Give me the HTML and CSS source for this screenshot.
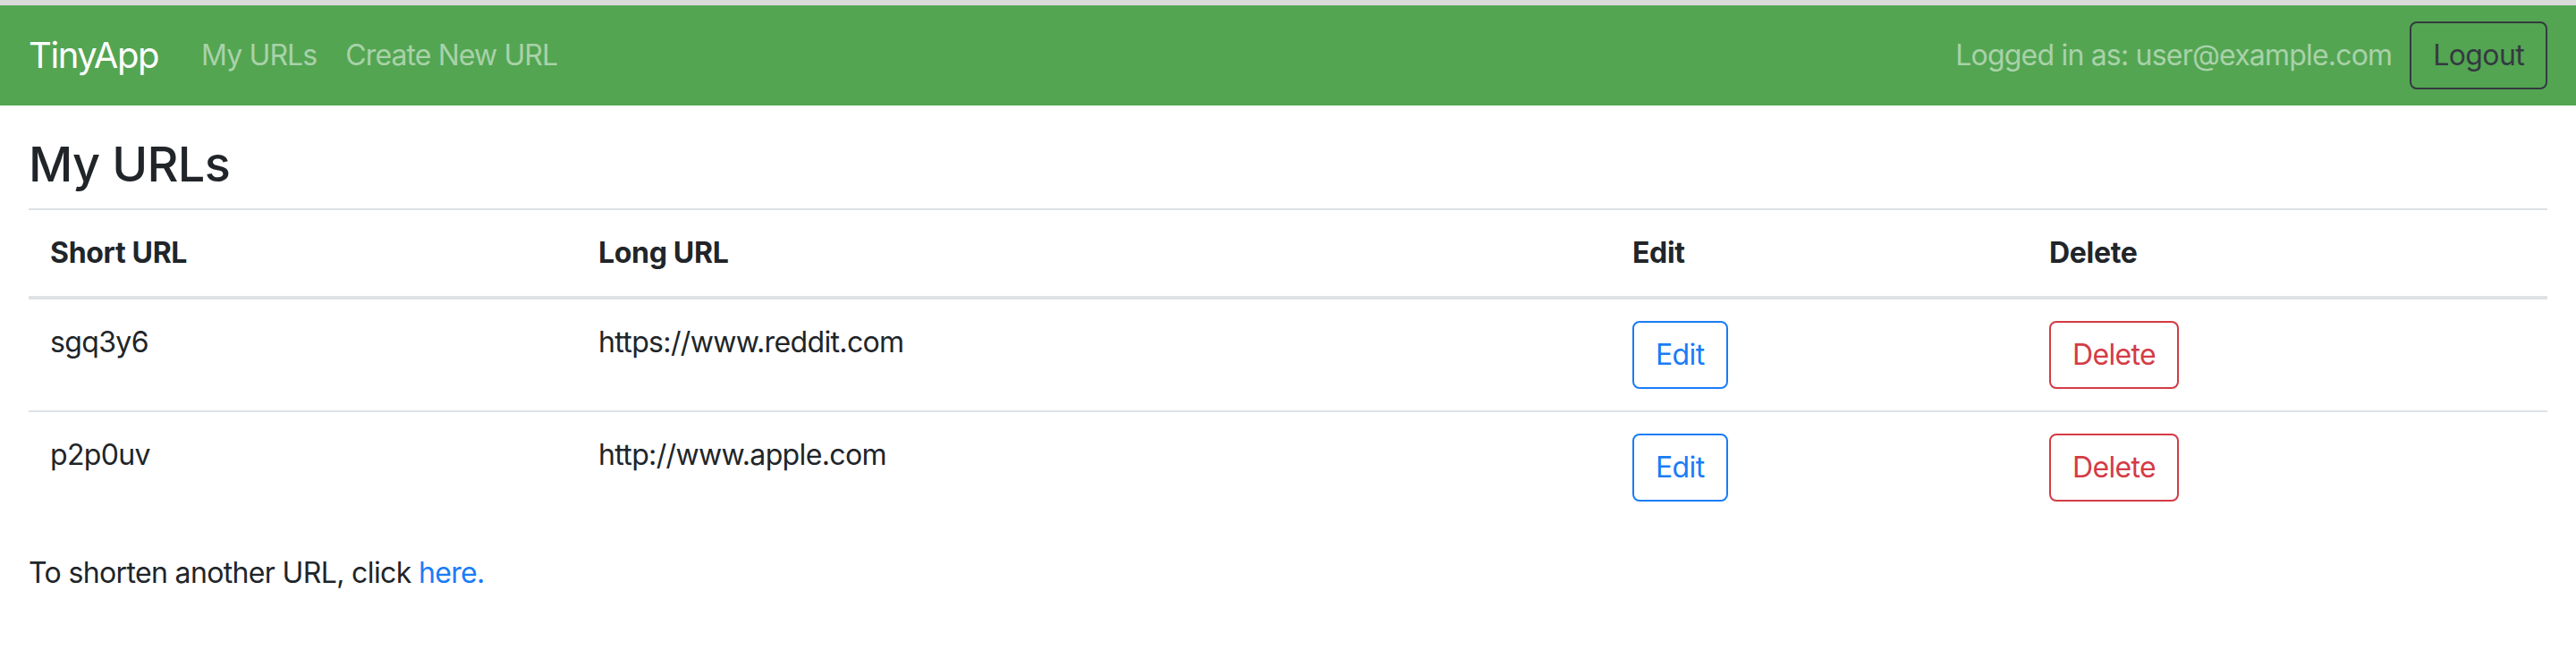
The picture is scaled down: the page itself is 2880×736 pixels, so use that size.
FILE: index.html
```html
<!DOCTYPE html>
<html lang="en">
<head>
<meta charset="utf-8">
<title>TinyApp</title>
<link rel="stylesheet" href="styles.css">
</head>
<body>
<div class="topstrip"></div>
<nav class="navbar">
  <a class="brand" href="#">TinyApp</a>
  <div class="nav-links">
    <a class="nav-link" href="#">My URLs</a>
    <a class="nav-link" href="#">Create New URL</a>
  </div>
  <div class="nav-right">
    <span class="navbar-text">Logged in as: user@example.com</span>
    <button class="btn btn-outline-dark">Logout</button>
  </div>
</nav>
<main class="main">
  <h3 class="title">My URLs</h3>
  <table class="table">
    <thead>
      <tr>
        <th class="col-short">Short URL</th>
        <th class="col-long">Long URL</th>
        <th class="col-edit">Edit</th>
        <th class="col-delete">Delete</th>
      </tr>
    </thead>
    <tbody>
      <tr>
        <td>sgq3y6</td>
        <td>https://www.reddit.com</td>
        <td><button class="btn btn-outline-primary">Edit</button></td>
        <td><button class="btn btn-outline-danger">Delete</button></td>
      </tr>
      <tr>
        <td>p2p0uv</td>
        <td>http://www.apple.com</td>
        <td><button class="btn btn-outline-primary">Edit</button></td>
        <td><button class="btn btn-outline-danger">Delete</button></td>
      </tr>
    </tbody>
  </table>
  <p class="footer-note">To shorten another URL, click <a class="link" href="#">here.</a></p>
</main>
</body>
</html>
```
FILE: styles.css
```css
* { box-sizing: border-box; }

body {
  margin: 0;
  font-family: "Inter", "Roboto", "Liberation Sans", sans-serif;
  font-size: 32px;
  line-height: 48px;
  letter-spacing: -0.02em;
  color: #212529;
  background: #fff;
}

.topstrip {
  height: 6px;
  background: #dadada;
}

.navbar {
  display: flex;
  align-items: center;
  background: #53a552;
  padding: 16px 32px;
  height: 112px;
}

.brand {
  font-size: 40px;
  line-height: 60px;
  letter-spacing: -0.035em;
  padding: 10px 0;
  margin-right: 32px;
  color: #fff;
  text-decoration: none;
}

.nav-links {
  display: flex;
}

.nav-link {
  padding: 16px 16px;
  font-size: 32px;
  line-height: 48px;
  letter-spacing: -0.028em;
  color: rgba(255, 255, 255, 0.5);
  text-decoration: none;
}

.nav-right {
  margin-left: auto;
  display: flex;
  align-items: center;
  gap: 20px;
}

.navbar-text {
  color: rgba(255, 255, 255, 0.5);
  font-size: 32px;
  line-height: 48px;
  letter-spacing: -0.025em;
}

.btn {
  font-family: inherit;
  font-size: 32px;
  line-height: 48px;
  letter-spacing: -0.02em;
  padding: 12px 24px;
  border: 2px solid transparent;
  border-radius: 8px;
  background: transparent;
  cursor: pointer;
  display: inline-block;
}

.btn-outline-dark {
  color: #343a40;
  border-color: #343a40;
}

.btn-outline-primary {
  color: #1a7cf7;
  border-color: #1a7cf7;
}

.btn-outline-danger {
  color: #d43b45;
  border-color: #d43b45;
}

.main {
  padding: 32px 32px;
}

.title {
  font-size: 54px;
  font-weight: 500;
  line-height: 67px;
  margin: 0 0 16px 0;
}

.table {
  width: 100%;
  border-collapse: collapse;
  margin-bottom: 32px;
}

.table th,
.table td {
  padding: 24px;
  text-align: left;
  vertical-align: top;
  border-top: 2px solid #dee2e6;
}

.table thead th {
  vertical-align: bottom;
  border-bottom: 4px solid #dee2e6;
  font-weight: 700;
  letter-spacing: -0.01em;
}

.col-short { width: 613px; }
.col-long { width: 1156px; }
.col-edit { width: 466px; }

.footer-note {
  margin: 0;
}

.link {
  color: #1a7cf7;
  text-decoration: none;
}
```
